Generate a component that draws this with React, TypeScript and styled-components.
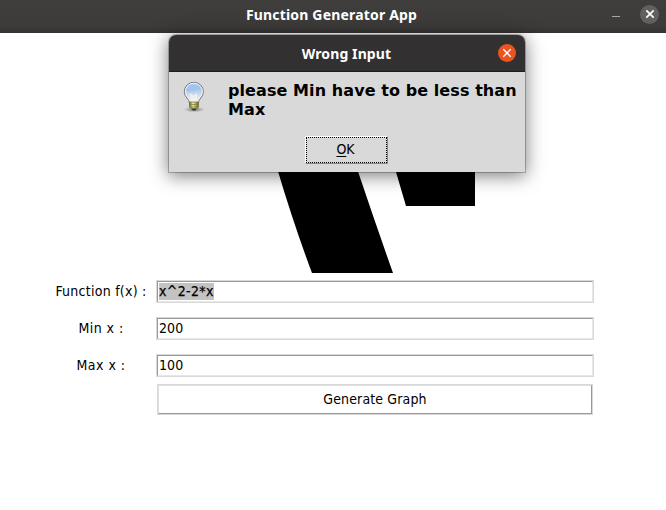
import React from "react";
import styled, { createGlobalStyle } from "styled-components";

const Global = createGlobalStyle`
  * { box-sizing: border-box; }
  html, body { margin: 0; background: #fff; overflow: hidden; }
`;
const uiFont = `"DejaVu Sans Condensed", "DejaVu Sans", sans-serif`;

const Window = styled.div`
  position: relative;
  display: flex;
  flex-direction: column;
  width: 666px;
  height: 510px;
  overflow: hidden;
  background: #fff;
  color: #000;
  font: 14px/17px ${uiFont};
  font-stretch: condensed;
`;
const TitleBar = styled.header`
  display: grid;
  grid-template-columns: 60px 1fr 60px;
  align-items: center;
  height: 33px;
  flex: none;
  padding: 0 7px 3px 4px;
  background: linear-gradient(#3f3e3c, #3c3b39 80%, #343331);
`;
const TitleText = styled.h1<{ $spacing: number }>`
  grid-column: 2;
  margin: 0;
  text-align: center;
  color: #fff;
  font: 700 14px/20px "Noto Sans", sans-serif;
  letter-spacing: ${(p) => p.$spacing}px;
  white-space: nowrap;
`;
const Controls = styled.div`
  display: flex;
  align-items: center;
  justify-content: flex-end;
  gap: 20px;
`;
const Minimize = styled.button`
  width: 8px;
  height: 1px;
  margin-top: 3px;
  padding: 0;
  border: 0;
  background: #aaa9a7;
`;
const Close = styled.button<{ $active?: boolean }>`
  display: grid;
  place-items: center;
  width: ${(p) => (p.$active ? 18 : 19)}px;
  height: ${(p) => (p.$active ? 18 : 19)}px;
  margin-top: -2px;
  padding: 0;
  border: 0;
  border-radius: 50%;
  background: ${(p) => (p.$active ? "#e95420" : "#62605f")};
  svg { display: block; }
`;
const Plot = styled.svg`
  display: block;
  flex: none;
`;
const Form = styled.form`
  display: flex;
  flex-direction: column;
  gap: 14px;
  padding: 7px 72px 0 46px;
`;
const Field = styled.div`
  display: grid;
  grid-template-columns: 110px 438px;
  align-items: center;
  height: 23px;
`;
const Label = styled.label<{ $spacing: number }>`
  text-align: center;
  font-size: 14px;
  letter-spacing: ${(p) => p.$spacing}px;
  white-space: nowrap;
`;
const Entry = styled.div`
  height: 23px;
  border: 1px solid #d9d9d9;
`;
const EntryValue = styled.div`
  height: 21px;
  padding: 0 1px;
  border: 1px solid #e7e7e7;
  border-top-color: #999;
  border-left-color: #999;
  font-size: 14px;
  letter-spacing: 0.1px;
  line-height: 19px;
`;
const Selection = styled.mark`
  display: inline-block;
  width: 55px;
  height: 17px;
  margin-top: 1px;
  background: #c3c3c3;
  color: #000;
  letter-spacing: 0.35px;
  line-height: 17px;
  vertical-align: top;
  -webkit-text-stroke: 0.25px #000;
`;
const Generate = styled.button`
  width: 436px;
  height: 31px;
  margin: -7px 0 0 111px;
  padding: 0;
  border: 1px solid #d9d9d9;
  background: #fff;
  color: #000;
  font: inherit;
  font-size: 14px;
  letter-spacing: 0.13px;
`;
const GenerateFace = styled.span`
  display: block;
  height: 29px;
  border: 1px solid #999;
  border-top-color: #dedede;
  border-left-color: #dedede;
  line-height: 27px;
`;
const Dialog = styled.section`
  position: absolute;
  left: 168px;
  top: 34px;
  width: 358px;
  height: 139px;
  border: 1px solid rgba(0, 0, 0, 0.24);
  border-radius: 8px 8px 0 0;
  background: #d9d9d9;
  background-clip: padding-box;
  box-shadow: 0 3px 18px rgba(0, 0, 0, 0.5);
`;
const DialogTitle = styled.header`
  display: grid;
  grid-template-columns: 40px 1fr 40px;
  align-items: center;
  height: 37px;
  padding: 1px 9px 0 8px;
  border-bottom: 1px solid #1d1c1c;
  border-radius: 7px 7px 0 0;
  background: #323030;
`;
const DialogBody = styled.div`
  display: grid;
  grid-template-columns: 59px 1fr;
  height: 64px;
  padding-top: 9px;
`;
const Bulb = styled.svg`
  margin-left: 11px;
`;
const Message = styled.p`
  margin: 0;
  font: 700 16px/19px "DejaVu Sans", sans-serif;
  font-stretch: normal;
  letter-spacing: 0.08px;
  white-space: nowrap;
`;
const Ok = styled.button`
  display: block;
  width: 83px;
  height: 28px;
  margin: 0 auto 0 136px;
  padding: 0;
  border: 1px solid #888;
  border-top-color: #fff;
  border-left-color: #fff;
  background: #d9d9d9;
  color: #000;
  font: inherit;
  font-size: 14px;
`;
const OkFocus = styled.span`
  display: block;
  height: 26px;
  padding-right: 2px;
  border: 1px dotted #000;
  line-height: 23px;
`;
const Mnemonic = styled.span`
  text-decoration: underline;
  text-decoration-thickness: 1px;
  text-underline-offset: 2px;
`;

function Cross({ width = 1.7 }: { width?: number }) {
  return (
    <svg width="10" height="10" viewBox="0 0 10 10">
      <path d="M1.3 1.3 8.7 8.7M8.7 1.3 1.3 8.7" stroke="#fff" strokeWidth={width} />
    </svg>
  );
}

function LightBulb() {
  return (
    <Bulb width="30" height="34" viewBox="0 0 30 34">
      <defs>
        <linearGradient id="glass" x1="0" y1="0" x2="0" y2="1">
          <stop offset="0" stopColor="#a9c9f0" />
          <stop offset=".4" stopColor="#b4cfee" />
          <stop offset=".75" stopColor="#dfe3e6" />
          <stop offset="1" stopColor="#e9e9e6" />
        </linearGradient>
        <linearGradient id="brass">
          <stop offset="0" stopColor="#66661e" />
          <stop offset=".4" stopColor="#f0f0a5" />
          <stop offset="1" stopColor="#66662a" />
        </linearGradient>
        <radialGradient id="ground">
          <stop offset="0" stopColor="#666" />
          <stop offset="1" stopColor="#999" stopOpacity="0" />
        </radialGradient>
      </defs>
      <ellipse cx="14.3" cy="28.5" rx="11" ry="3" fill="url(#ground)" />
      <path d="M9.5 22c0-4-5.2-5.5-5.2-11.2A9.4 9.4 0 0 1 13.9 1.3a9.4 9.4 0 0 1 9.5 9.5c0 5.7-5.1 7.2-5.1 11.2Z" fill="url(#glass)" stroke="#737982" />
      <path d="M10.5 21c0-4-5.2-5.5-5.2-10.3a8.5 8.5 0 0 1 17.1 0c0 4.8-5.1 6.3-5.1 10.3" fill="none" stroke="#f4f8fa" strokeOpacity=".85" />
      <path d="M6.5 10c0-4 3.3-6 7.4-6s7.2 2 7.2 5c-4-1-8 3-14.6 1" fill="#91b9e9" opacity=".45" />
      <path d="M12 21 10.5 13l3 2 3.5-2-1.3 8" fill="#fff" fillOpacity=".45" stroke="#f7f7f2" strokeWidth=".8" />
      <path d="M9.5 21h9v5l-2 2h-5l-2-2z" fill="url(#brass)" stroke="#6d6d31" strokeWidth=".7" />
      <path d="m9.7 24 8.6-1M10.3 26.5l7.2-1" stroke="#77763c" strokeWidth=".8" />
      <path d="M11.7 27.5h4.7l-1 2h-2.7z" fill="#343431" />
    </Bulb>
  );
}

function FormRow({ label, spacing, children }: { label: string; spacing: number; children: React.ReactNode }) {
  return (
    <Field>
      <Label $spacing={spacing}>{label}</Label>
      <Entry><EntryValue>{children}</EntryValue></Entry>
    </Field>
  );
}

export default function App() {
  return (
    <>
      <Global />
      <Window>
        <TitleBar>
          <TitleText $spacing={0.18}>Function Generator App</TitleText>
          <Controls>
            <Minimize aria-label="Minimize" />
            <Close aria-label="Close"><Cross width={1.65} /></Close>
          </Controls>
        </TitleBar>
        <Plot width="666" height="240" viewBox="0 33 666 240">
          <path d="M266 130H343L358.2 172Q376 225 393 273H312Q294 225 278.2 172ZM384 130H475V206H406L396 172Z" />
        </Plot>
        <Form>
          <FormRow label="Function f(x) :" spacing={0.25}><Selection>x^2-2*x</Selection></FormRow>
          <FormRow label="Min x :" spacing={0.45}>200</FormRow>
          <FormRow label="Max x :" spacing={0.45}>100</FormRow>
          <Generate type="button"><GenerateFace>Generate Graph</GenerateFace></Generate>
        </Form>
        <Dialog role="dialog">
          <DialogTitle>
            <TitleText $spacing={0.1}>Wrong Input</TitleText>
            <Controls><Close $active aria-label="Close"><Cross width={1.4} /></Close></Controls>
          </DialogTitle>
          <DialogBody>
            <LightBulb />
            <Message>please Min have to be less than<br />Max</Message>
          </DialogBody>
          <Ok><OkFocus><Mnemonic>O</Mnemonic>K</OkFocus></Ok>
        </Dialog>
      </Window>
    </>
  );
}
